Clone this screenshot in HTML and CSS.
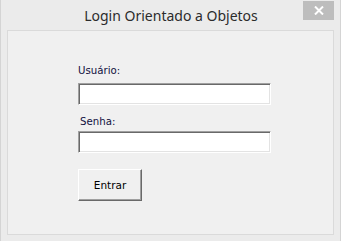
FILE: index.html
```html
<!DOCTYPE html>
<html>
<head>
<meta charset="utf-8">
<link rel="stylesheet" href="styles.css">
</head>
<body>
<div class="window">
  <div class="titlebar">
    <span class="title">Login Orientado a Objetos</span>
    <button class="close" aria-label="Fechar">
      <svg width="10" height="9" viewBox="0 0 10 9"><path d="M1 0.5 L9 8.5 M9 0.5 L1 8.5" stroke="#fff" stroke-width="2" fill="none"/></svg>
    </button>
  </div>
  <div class="panel">
    <label class="label">Usuário:</label>
    <div class="input"></div>
    <label class="label label-senha">Senha:</label>
    <div class="input"></div>
    <div class="btn">Entrar</div>
  </div>
</div>
</body>
</html>
```
FILE: styles.css
```css
html, body {
  margin: 0;
  padding: 0;
  background: #ebebeb;
}
.window {
  width: 341px;
  height: 241px;
  box-sizing: border-box;
  background: #ebebeb;
  border-left: 1px solid #d4d4d4;
  border-right: 1px solid #d4d4d4;
  display: flex;
  flex-direction: column;
  padding: 0 6px 6px 6px;
}
.titlebar {
  height: 30px;
  position: relative;
  display: flex;
  justify-content: center;
  flex-shrink: 0;
}
.title {
  font-family: "Noto Sans", sans-serif;
  font-size: 14px;
  color: #2b2b2b;
  line-height: 20px;
  margin-top: 6px;
  margin-left: 1px;
}
.close {
  position: absolute;
  right: 0;
  top: 1px;
  width: 31px;
  height: 19px;
  background: #bdbdbd;
  border: 0;
  padding: 0;
  display: flex;
  align-items: center;
  justify-content: center;
}
.panel {
  flex: 1;
  background: #f0f0f0;
  border: 1px solid #dadada;
  display: flex;
  flex-direction: column;
  align-items: flex-start;
  padding: 33px 0 0 70px;
}
.label {
  font-family: "DejaVu Sans", sans-serif;
  font-size: 10.2px;
  line-height: 13px;
  color: #101040;
  height: 13px;
  margin-bottom: 6px;
}
.label-senha {
  margin-left: 2px;
  margin-top: 10px;
  margin-bottom: 3px;
}
.input {
  width: 193px;
  height: 22px;
  box-sizing: border-box;
  background: #fff;
  border-top: 1px solid #a0a0a0;
  border-left: 1px solid #a0a0a0;
  border-right: 1px solid #fff;
  border-bottom: 1px solid #fff;
  box-shadow: inset 1px 1px 0 #696969, inset -1px -1px 0 #e3e3e3;
}
.btn {
  margin-top: 16px;
  width: 64px;
  height: 32px;
  box-sizing: border-box;
  border-top: 1px solid #fff;
  border-left: 1px solid #fff;
  border-right: 1px solid #696969;
  border-bottom: 1px solid #696969;
  box-shadow: inset -1px -1px 0 #a0a0a0;
  background: #f0f0f0;
  font-family: "DejaVu Sans", sans-serif;
  font-size: 10.5px;
  color: #000;
  display: flex;
  align-items: center;
  justify-content: center;
}
```
